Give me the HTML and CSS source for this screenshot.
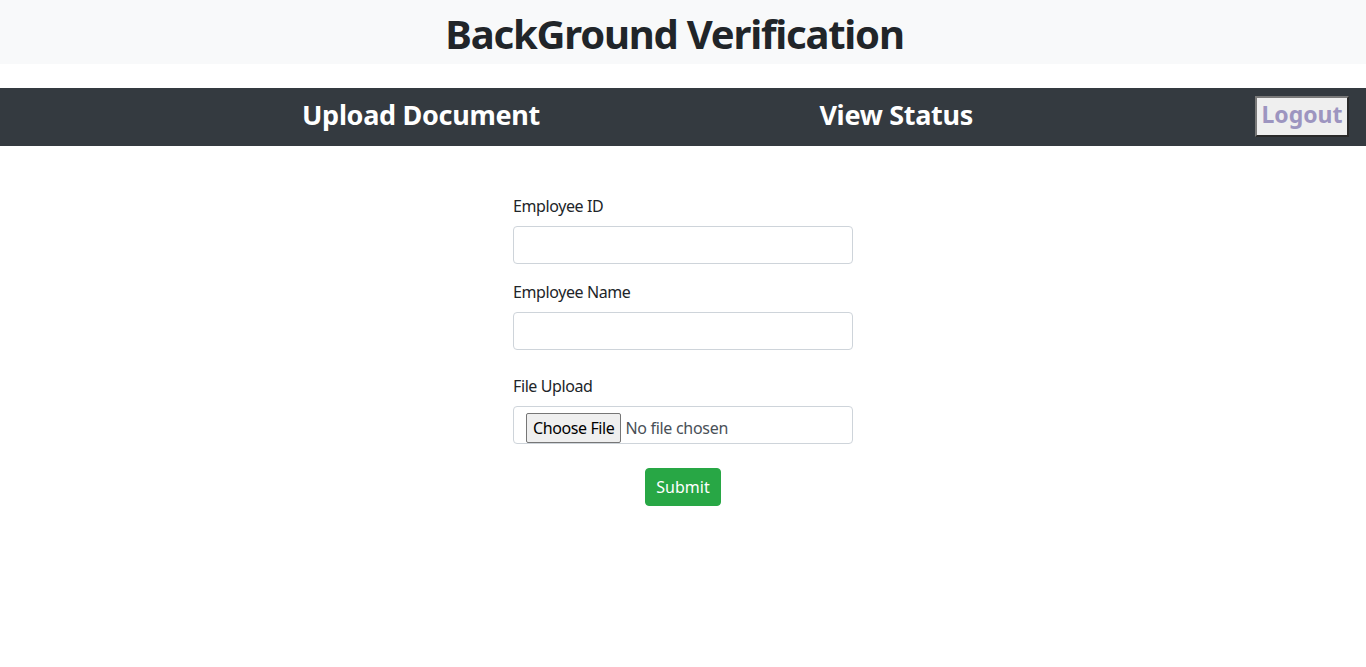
FILE: index.html
```html
<!DOCTYPE html>
<html lang="en">
<head>
<meta charset="utf-8">
<title>BackGround Verification</title>
<link rel="stylesheet" href="styles.css">
</head>
<body>
<header class="top">
  <h1 class="title">BackGround Verification</h1>
</header>
<nav class="navbar">
  <div class="nav-cell"><a class="nav-link" href="#">Upload Document</a></div>
  <div class="nav-cell"><a class="nav-link" href="#">View Status</a></div>
  <div class="nav-cell nav-end"><button class="logout" type="button">Logout</button></div>
</nav>
<main class="main">
  <form class="form">
    <div class="group">
      <label class="label" for="eid">Employee ID</label>
      <input class="control" id="eid" type="text">
    </div>
    <div class="group">
      <label class="label" for="ename">Employee Name</label>
      <input class="control" id="ename" type="text">
    </div>
    <div class="group group-file">
      <label class="label" for="efile">File Upload</label>
      <input class="control file" id="efile" type="file">
    </div>
    <div class="actions">
      <button class="submit" type="button">Submit</button>
    </div>
  </form>
</main>
</body>
</html>
```
FILE: styles.css
```css
* { box-sizing: border-box; }
html, body { margin: 0; padding: 0; }
body {
  font-family: "Segoe UI", "Noto Sans", "Open Sans", sans-serif;
  font-size: 16px;
  line-height: 1.5;
  color: #212529;
  background: #fff;
}
.top {
  background: #f8f9fa;
  height: 64px;
  display: flex;
  justify-content: center;
  align-items: center;
  padding-right: 17px;
  margin-bottom: 24px;
}
.title {
  margin: 4px 0 0;
  font-size: 40px;
  font-weight: 700;
  line-height: 1.2;
  letter-spacing: -1.2px;
  color: #212529;
}
.navbar {
  background: #343a40;
  height: 58px;
  display: grid;
  grid-template-columns: 540px 433px 1fr;
  align-items: center;
}
.nav-cell { display: flex; justify-content: flex-end; }
.nav-end { padding-right: 17px; }
.nav-link {
  color: #fff;
  text-decoration: none;
  font-size: 27px;
  font-weight: 700;
  line-height: 1.2;
  letter-spacing: -0.3px;
  margin-top: -4px;
}
.logout {
  font-family: inherit;
  width: 94px;
  height: 41px;
  padding: 0 0 4px;
  margin-top: -2px;
  font-size: 23px;
  font-weight: 700;
  line-height: 1;
  color: #9d95c0;
  background: #efefef;
  border: 2px solid;
  border-color: #7a7a7a #2a2a2a #2a2a2a #7a7a7a;
}
.main {
  display: flex;
  justify-content: center;
  padding-top: 48px;
}
.form { width: 340px; }
.group { margin-bottom: 16px; }
.group-file { margin-top: 24px; margin-bottom: 24px; }
.label {
  display: block;
  margin-bottom: 8px;
  font-size: 16px;
  letter-spacing: -0.4px;
}
.control {
  display: block;
  width: 100%;
  height: 38px;
  padding: 6px 12px;
  font-family: inherit;
  font-size: 16px;
  color: #495057;
  background: #fff;
  border: 1px solid #ced4da;
  border-radius: 4px;
}
.file {
  padding: 6px 12px 0;
  font-size: 16px;
  line-height: 30px;
  overflow: visible;
  letter-spacing: -0.3px;
}
.file::file-selector-button {
  font-family: inherit;
  font-size: 16px;
  letter-spacing: -0.4px;
  height: 30px;
  padding: 0 6px;
  margin: 0 4px 0 0;
  color: #000;
  background: #efefef;
  border: 1px solid #767676;
  border-radius: 2px;
  vertical-align: top;
}
.actions { display: flex; justify-content: center; }
.submit {
  font-family: inherit;
  width: 76px;
  height: 38px;
  font-size: 16px;
  color: #fff;
  background: #28a745;
  border: 1px solid #28a745;
  border-radius: 4px;
  padding: 0;
}
```
